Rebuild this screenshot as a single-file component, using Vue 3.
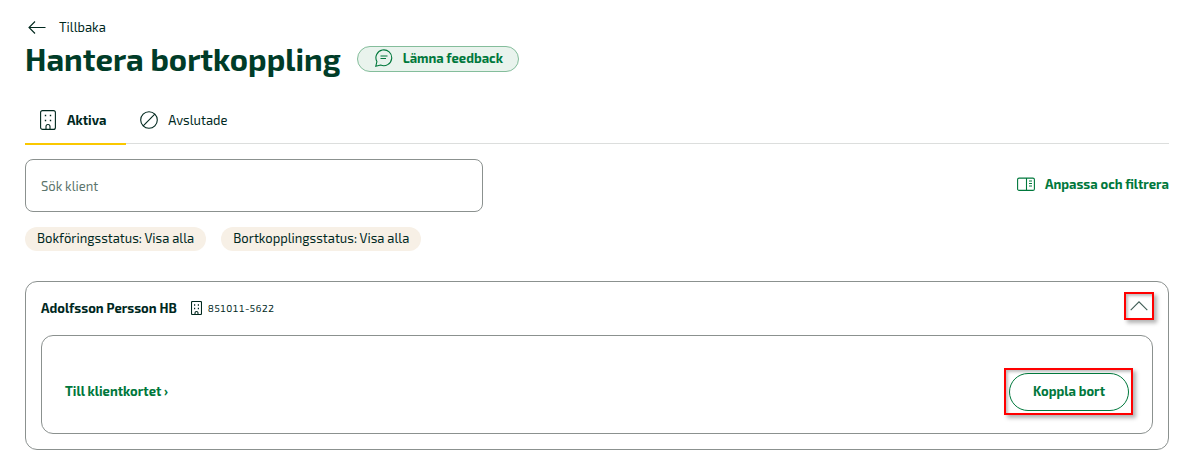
<template>
  <main class="page">
    <a class="back" href="#">
      <svg width="18" height="14" viewBox="0 0 18 14">
        <path d="M17.500 7.500H1M7 1.500L1 7.500L7 13.500" />
      </svg>
      <span>Tillbaka</span>
    </a>

    <header class="heading">
      <h1>Hantera bortkoppling</h1>
      <button class="feedback" type="button">
        <svg width="18" height="18" viewBox="0 0 18 18">
          <path d="M1.900 12.600A7.900 7.900 0 1 1 5.600 16L.8 17.200Z" />
          <path d="M5.500 7H12.500M5.500 9.500H11" />
        </svg>
        <span>Lämna feedback</span>
      </button>
    </header>

    <nav class="tabs">
      <button
        v-for="tab in tabs"
        :key="tab.id"
        type="button"
        class="tab"
        :class="{ active: tab.id === activeTab }"
        @click="activeTab = tab.id"
      >
        <svg v-if="tab.id === 'active'" width="18" height="20" viewBox="0 0 18 20">
          <rect x="1.600" y=".6" width="14.800" height="18.800" rx="2" />
          <path d="M7 19.400V16.500A2 2 0 0 1 11 16.500V19.400" />
          <path class="dots" d="M5.800 5.500h1.400M10.800 5.500h1.400M5.800 10.500h1.400M10.800 10.500h1.400" />
        </svg>
        <svg v-else width="18" height="18" viewBox="0 0 18 18">
          <circle cx="9" cy="9" r="8.300" />
          <path d="M3.200 14.800L14.800 3.200" />
        </svg>
        <span>{{ tab.label }}</span>
      </button>
    </nav>

    <div class="toolbar">
      <input v-model="query" class="search" type="text" placeholder="Sök klient" aria-label="Sök klient" />
      <button class="filter" type="button">
        <svg width="18" height="14" viewBox="0 0 18 14">
          <rect x=".6" y="1.100" width="16.800" height="12.300" rx="1.500" />
          <path d="M9.500 1.100V13.400M12 4H15M12 6.500H15M12 9H15" />
        </svg>
        <span>Anpassa och filtrera</span>
      </button>
    </div>

    <div class="chips">
      <span v-for="chip in chips" :key="chip" class="chip">{{ chip }}</span>
    </div>

    <section class="client">
      <div class="client-header">
        <h2>Adolfsson Persson HB</h2>
        <svg width="11" height="14" viewBox="0 0 11 14">
          <rect x=".5" y=".5" width="10" height="13" rx="1" />
          <path d="M4 13.500V12A1.500 1.500 0 0 1 7 12V13.500" />
          <path class="dots" d="M3 4h1.200M6.800 4h1.200M3 7.500h1.200M6.800 7.500h1.200" />
        </svg>
        <span class="org-number">851011-5622</span>
        <button
          class="toggle marked"
          type="button"
          aria-label="Visa eller dölj klient"
          :aria-expanded="expanded"
          @click="expanded = !expanded"
        >
          <svg width="18" height="10" viewBox="0 0 18 10" :class="{ flipped: !expanded }">
            <path d="M.7 9.200L9 .8L17.300 9.200" />
          </svg>
        </button>
      </div>
      <div v-if="expanded" class="client-body">
        <a class="client-link" href="#">Till klientkortet ›</a>
        <div class="marked">
          <button class="disconnect" type="button">Koppla bort</button>
        </div>
      </div>
    </section>
  </main>
</template>

<script setup>
import { ref } from 'vue'

const tabs = [
  { id: 'active', label: 'Aktiva' },
  { id: 'closed', label: 'Avslutade' }
]
const chips = ['Bokföringsstatus: Visa alla', 'Bortkopplingsstatus: Visa alla']

const activeTab = ref('active')
const query = ref('')
const expanded = ref(true)
</script>

<style>
body {
  margin: 0;
  background: #fff;
}
</style>

<style scoped>
.page {
  box-sizing: border-box;
  padding: 18px 25px 0;
  font-family: 'Exo 2', 'Noto Sans', sans-serif;
  font-size: 13px;
  line-height: 18px;
  color: #00281e;
}

button {
  padding: 0;
  border: 0;
  background: none;
  font: inherit;
  color: inherit;
  cursor: pointer;
}

a {
  color: inherit;
  text-decoration: none;
}

svg {
  flex: none;
  fill: none;
  stroke: currentColor;
  stroke-width: 1.1;
}

.dots {
  stroke-width: 1.4;
}

.back {
  display: flex;
  align-items: center;
  gap: 13px;
  width: fit-content;
  padding-left: 3px;
}

.heading {
  display: flex;
  align-items: center;
  gap: 16px;
  height: 46px;
}

h1 {
  margin: 0;
  font-size: 31px;
  line-height: 46px;
  font-weight: 700;
  color: #003c28;
}

.feedback {
  display: flex;
  align-items: center;
  gap: 10px;
  height: 26px;
  padding: 0 15px 2px 17px;
  border: 1px solid #84bd9b;
  border-radius: 13px;
  background: #e9f3ed;
  color: #00783c;
  font-weight: 700;
}

.feedback,
.disconnect {
  box-sizing: border-box;
}

.tabs {
  display: flex;
  height: 45px;
  margin-top: 16px;
  border-bottom: 1px solid #dcdedd;
}

.tab {
  display: flex;
  align-items: center;
  gap: 10px;
  box-sizing: border-box;
  height: 47px;
  padding: 0 20px 2px 14px;
  border-bottom: 2px solid transparent;
}

.tab.active {
  border-color: #fac800;
  font-weight: 700;
}

.toolbar {
  display: flex;
  align-items: flex-start;
  justify-content: space-between;
  margin-top: 15px;
}

.search {
  box-sizing: border-box;
  width: 40%;
  height: 53px;
  padding: 0 15px;
  border: 1px solid #8b918f;
  border-radius: 8px;
  font: inherit;
  color: inherit;
}

.search::placeholder {
  color: #5c756c;
  opacity: 1;
}

.filter {
  display: flex;
  align-items: center;
  gap: 10px;
  margin-top: 16px;
  color: #00783c;
  font-weight: 700;
}

.chips {
  display: flex;
  gap: 15px;
  margin-top: 15px;
}

.chip {
  padding: 2px 12px 4px;
  border-radius: 12px;
  background: #f7f0e6;
}

.client {
  margin-top: 30px;
  padding: 0 15px 15px;
  border: 1px solid #8b918f;
  border-radius: 12px;
}

.client-header {
  display: flex;
  align-items: center;
  box-sizing: border-box;
  height: 53px;
  padding-bottom: 2px;
}

h2 {
  margin: 0 14px 0 0;
  font-size: 13px;
  font-weight: 700;
}

.org-number {
  margin-left: 6px;
  font-size: 10px;
  font-variant-numeric: tabular-nums;
}

.marked {
  border: 2px solid #f00;
  box-shadow: 3px 3px 4px rgba(0, 0, 0, 0.3), inset 2px 2px 3px rgba(0, 0, 0, 0.25);
}

.toggle {
  display: flex;
  align-items: center;
  align-self: flex-start;
  justify-content: center;
  box-sizing: border-box;
  width: 30px;
  height: 28px;
  margin: 10px -1px 0 auto;
}

.toggle svg {
  opacity: 0.75;
}

.flipped {
  transform: rotate(180deg);
}

.client-body {
  display: flex;
  align-items: center;
  justify-content: space-between;
  box-sizing: border-box;
  min-height: 99px;
  padding: 26px 19px 12px 23px;
  border: 1px solid #8b918f;
  border-radius: 12px;
}

.client-link {
  padding-bottom: 2px;
  color: #00783c;
  font-weight: 700;
}

.client-body .marked {
  padding: 3px 2px 2px 3px;
}

.disconnect {
  display: block;
  height: 38px;
  padding: 0 23px 2px;
  border: 1px solid #00783c;
  border-radius: 19px;
  background: #fff;
  color: #00783c;
  font-weight: 700;
}
</style>
